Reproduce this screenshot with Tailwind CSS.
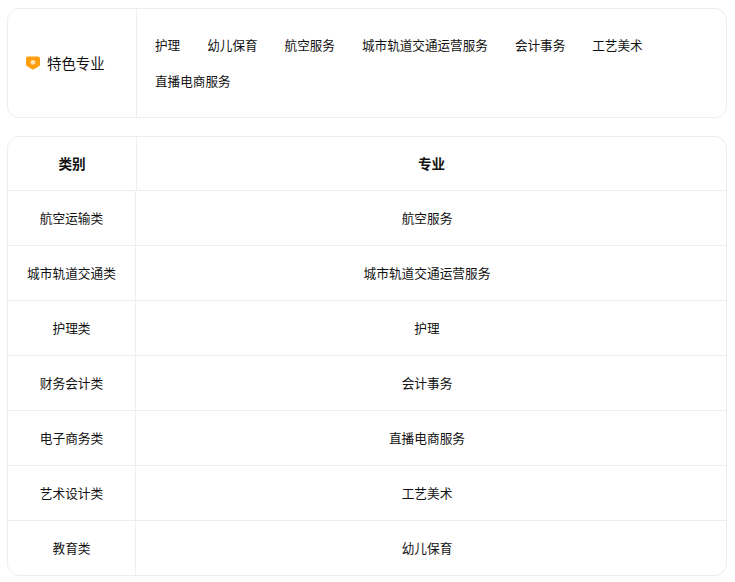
<!DOCTYPE html>
<html lang="zh-CN">
<head>
    <meta charset="UTF-8">
    <title>特色专业</title>
    <script src="https://cdn.jsdelivr.net/npm/@tailwindcss/browser@4"></script>
</head>
<body class="bg-white text-[#111111] font-['Noto_Sans_CJK_SC','Liberation_Sans',sans-serif]">
    <div class="w-[735px] h-[582px] pt-2 pl-[7px] overflow-hidden">

        <!-- Featured majors -->
        <div class="w-[720px] h-[110px] flex border border-[#eeeeee] rounded-xl">
            <div class="w-[129px] border-r border-[#eeeeee] flex items-center pl-[18px] gap-[7px] text-[14.400px]">
                <svg width="14" height="14" viewBox="0 0 14 14">
                    <path d="M2 .5h10a2 2 0 0 1 2 2v6.300q0 .8-.7 1.200l-5.300 3.300q-1 .6-2 0l-5.300-3.300q-.7-.4-.7-1.200v-6.300a2 2 0 0 1 2-2z" fill="#ff9f0f"/>
                    <circle cx="7" cy="6.300" r="2.400" fill="#ffe3b3"/>
                </svg>
                <span>特色专业</span>
            </div>
            <div class="flex-1 pl-[18px] pt-[26px] flex flex-wrap content-start gap-x-[27px] gap-y-[16px] text-[12.600px] leading-[20px]">
                <span>护理</span>
                <span>幼儿保育</span>
                <span>航空服务</span>
                <span>城市轨道交通运营服务</span>
                <span>会计事务</span>
                <span>工艺美术</span>
                <span>直播电商服务</span>
            </div>
        </div>

        <!-- Category table -->
        <div class="w-[720px] mt-[18px] border border-[#eeeeee] rounded-xl text-[12.700px]">
            <div class="h-[53px] flex font-bold text-[13.600px]">
                <div class="w-[129px] border-r border-[#eeeeee] flex items-center justify-center">类别</div>
                <div class="flex-1 flex items-center justify-center">专业</div>
            </div>
            <div class="h-[55px] flex border-t border-[#eeeeee]">
                <div class="w-[128px] border-r border-[#eeeeee] flex items-center justify-center">航空运输类</div>
                <div class="flex-1 pr-2 flex items-center justify-center">航空服务</div>
            </div>
            <div class="h-[55px] flex border-t border-[#eeeeee]">
                <div class="w-[128px] border-r border-[#eeeeee] flex items-center justify-center">城市轨道交通类</div>
                <div class="flex-1 pr-2 flex items-center justify-center">城市轨道交通运营服务</div>
            </div>
            <div class="h-[55px] flex border-t border-[#eeeeee]">
                <div class="w-[128px] border-r border-[#eeeeee] flex items-center justify-center">护理类</div>
                <div class="flex-1 pr-2 flex items-center justify-center">护理</div>
            </div>
            <div class="h-[55px] flex border-t border-[#eeeeee]">
                <div class="w-[128px] border-r border-[#eeeeee] flex items-center justify-center">财务会计类</div>
                <div class="flex-1 pr-2 flex items-center justify-center">会计事务</div>
            </div>
            <div class="h-[55px] flex border-t border-[#eeeeee]">
                <div class="w-[128px] border-r border-[#eeeeee] flex items-center justify-center">电子商务类</div>
                <div class="flex-1 pr-2 flex items-center justify-center">直播电商服务</div>
            </div>
            <div class="h-[55px] flex border-t border-[#eeeeee]">
                <div class="w-[128px] border-r border-[#eeeeee] flex items-center justify-center">艺术设计类</div>
                <div class="flex-1 pr-2 flex items-center justify-center">工艺美术</div>
            </div>
            <div class="h-[55px] flex border-t border-[#eeeeee]">
                <div class="w-[128px] border-r border-[#eeeeee] flex items-center justify-center">教育类</div>
                <div class="flex-1 pr-2 flex items-center justify-center">幼儿保育</div>
            </div>
        </div>
    </div>
</body>
</html>
